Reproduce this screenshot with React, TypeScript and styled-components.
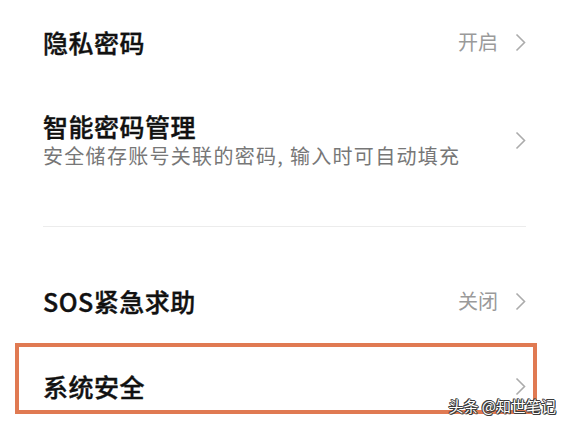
import styled, { createGlobalStyle } from "styled-components";

const GlobalStyle = createGlobalStyle`
  html, body {
    margin: 0;
    padding: 0;
    background: #fff;
  }
  body {
    font-family: "Noto Sans CJK SC", "Noto Sans", sans-serif;
  }
`;

const Page = styled.div`
  position: relative;
  width: 569px;
  height: 427px;
  overflow: hidden;
  background: #fff;
`;

const Row = styled.div<{ $height?: number }>`
  display: flex;
  align-items: center;
  justify-content: space-between;
  height: ${(p) => (p.$height ? `${p.$height}px` : "auto")};
  padding: 0 43px;
  box-sizing: border-box;
`;

const TallRow = styled(Row)`
  padding-top: 26px;
  padding-bottom: 25px;
`;

const Highlight = styled.div`
  display: flex;
  align-items: center;
  justify-content: space-between;
  margin: 12px 32px 0 15px;
  height: 71px;
  border: 4px solid #e07a52;
  box-sizing: border-box;
  padding: 25px 7px 10px 24px;
`;

const TextBlock = styled.div`
  display: flex;
  flex-direction: column;
`;

const Title = styled.div`
  font-size: 25px;
  line-height: 32px;
  font-weight: 500;
  color: #111;
  -webkit-text-stroke: 0.4px #111;
  letter-spacing: 0.5px;
`;

const Subtitle = styled.div`
  font-size: 20px;
  line-height: 28px;
  color: #777;
  letter-spacing: 1.3px;
`;

const Trail = styled.div`
  display: flex;
  align-items: center;
  gap: 17px;
`;

const Value = styled.span`
  font-size: 20px;
  line-height: 28px;
  color: #9a9a9a;
`;

const Divider = styled.div`
  margin: 31px 43px 44px;
  height: 1px;
  background: #ececec;
`;

const Watermark = styled.div`
  position: absolute;
  right: 13px;
  top: 397px;
  font-size: 15px;
  line-height: 18px;
  color: #fff;
  text-shadow: 1px 0 0 #3a3a3a, -1px 0 0 #3a3a3a, 0 1px 0 #3a3a3a,
    0 -1px 0 #3a3a3a, 1px 1px 0 #3a3a3a, -1px -1px 0 #3a3a3a;
`;

const Chevron = () => (
  <svg width="11" height="19" viewBox="0 0 11 19">
    <polyline
      points="1.5,1.5 9.5,9.5 1.5,17.5"
      fill="none"
      stroke="#ababab"
      strokeWidth="1.6"
    />
  </svg>
);

export default function App() {
  return (
    <Page>
      <GlobalStyle />
      <Row $height={84}>
        <Title>隐私密码</Title>
        <Trail>
          <Value>开启</Value>
          <Chevron />
        </Trail>
      </Row>
      <TallRow>
        <TextBlock>
          <Title>智能密码管理</Title>
          <Subtitle>安全储存账号关联的密码, 输入时可自动填充</Subtitle>
        </TextBlock>
        <Chevron />
      </TallRow>
      <Divider />
      <Row $height={60}>
        <Title>SOS紧急求助</Title>
        <Trail>
          <Value>关闭</Value>
          <Chevron />
        </Trail>
      </Row>
      <Highlight>
        <Title>系统安全</Title>
        <Chevron />
      </Highlight>
      <Watermark>头条 @知世笔记</Watermark>
    </Page>
  );
}
